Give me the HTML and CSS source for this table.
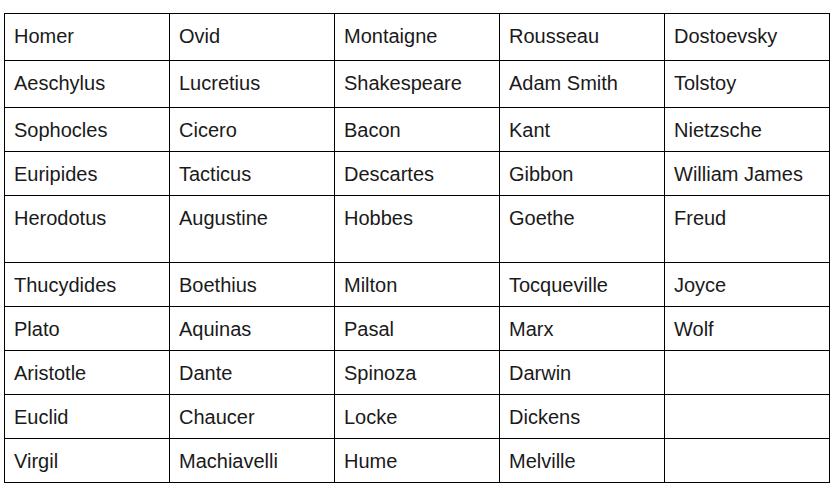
FILE: index.html
```html
<!DOCTYPE html>
<html>
<head>
<meta charset="utf-8">
<link rel="stylesheet" href="styles.css">
</head>
<body>
<div class="grid">
  <div class="c r-a">Homer</div><div class="c r-a">Ovid</div><div class="c r-a">Montaigne</div><div class="c r-a">Rousseau</div><div class="c r-a">Dostoevsky</div>
  <div class="c r-a">Aeschylus</div><div class="c r-a">Lucretius</div><div class="c r-a">Shakespeare</div><div class="c r-a">Adam Smith</div><div class="c r-a">Tolstoy</div>
  <div class="c">Sophocles</div><div class="c">Cicero</div><div class="c">Bacon</div><div class="c">Kant</div><div class="c">Nietzsche</div>
  <div class="c">Euripides</div><div class="c">Tacticus</div><div class="c">Descartes</div><div class="c">Gibbon</div><div class="c">William James</div>
  <div class="c r-tall">Herodotus</div><div class="c r-tall">Augustine</div><div class="c r-tall">Hobbes</div><div class="c r-tall">Goethe</div><div class="c r-tall">Freud</div>
  <div class="c">Thucydides</div><div class="c">Boethius</div><div class="c">Milton</div><div class="c">Tocqueville</div><div class="c">Joyce</div>
  <div class="c">Plato</div><div class="c">Aquinas</div><div class="c">Pasal</div><div class="c">Marx</div><div class="c">Wolf</div>
  <div class="c">Aristotle</div><div class="c">Dante</div><div class="c">Spinoza</div><div class="c">Darwin</div><div class="c"></div>
  <div class="c">Euclid</div><div class="c">Chaucer</div><div class="c">Locke</div><div class="c">Dickens</div><div class="c"></div>
  <div class="c">Virgil</div><div class="c">Machiavelli</div><div class="c">Hume</div><div class="c">Melville</div><div class="c"></div>
</div>
</body>
</html>
```

FILE: styles.css
```css
html, body {
  margin: 0;
  padding: 0;
  background: #ffffff;
}
body {
  padding: 13px 0 0 4px;
  font-family: "Liberation Sans", Arial, sans-serif;
  font-size: 20px;
  color: #1a1a1a;
}
.grid {
  display: grid;
  grid-template-columns: repeat(5, 165px);
  width: 825px;
  border-top: 1px solid #000;
  border-left: 1px solid #000;
}
.c {
  box-sizing: border-box;
  height: 44px;
  border-right: 1px solid #000;
  border-bottom: 1px solid #000;
  padding: 11px 0 0 9px;
  line-height: 23px;
  white-space: nowrap;
}
.r-a {
  height: 47px;
}
.r-tall {
  height: 67px;
}
```
